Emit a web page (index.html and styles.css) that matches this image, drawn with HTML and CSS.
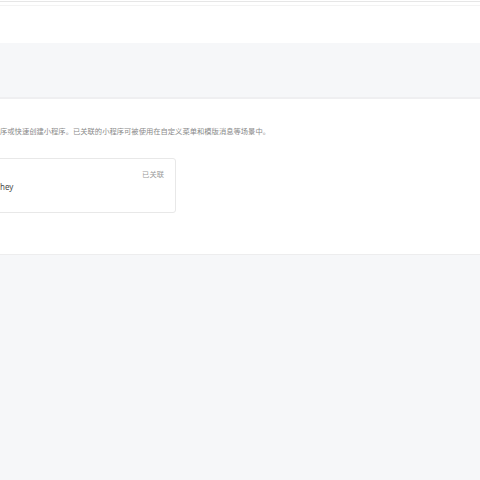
FILE: index.html
```html
<!DOCTYPE html>
<html lang="zh-CN">
<head>
<meta charset="utf-8">
<title>小程序管理</title>
<link rel="stylesheet" href="styles.css">
</head>
<body>
<div class="page">
  <header class="topbar"></header>
  <div class="tabs"></div>
  <section class="panel">
    <div class="panel-inner">
      <p class="desc">序或快速创建小程序。已关联的小程序可被使用在自定义菜单和模版消息等场景中。</p>
      <div class="card">
        <span class="name">hey</span>
        <span class="status">已关联</span>
      </div>
    </div>
  </section>
</div>
</body>
</html>
```

FILE: styles.css
```css
html, body {
  margin: 0;
  padding: 0;
  background: #f6f7f9;
  font-family: "Noto Sans CJK SC", "Liberation Sans", sans-serif;
}
.page {
  width: 480px;
  overflow: hidden;
}
.topbar {
  height: 39px;
  background: #fff;
  border-top: 1px solid #fff;
  box-shadow: inset 0 1px 0 #e6e6e6, inset 0 4px 0 #fff, inset 0 5px 0 #f3f3f3;
  padding-top: 3px;
}
.tabs {
  height: 54px;
  background: #f6f7f9;
  border-bottom: 2px solid #efeff1;
}
.panel {
  background: #fff;
  border-bottom: 1px solid #ededee;
  height: 155px;
}
.panel-inner {
  padding-top: 27px;
}
.desc {
  margin: 0;
  font-size: 7.3px;
  line-height: 10px;
  color: #8a8a8a;
  white-space: nowrap;
}
.card {
  margin-top: 22px;
  margin-left: -10px;
  width: 184px;
  height: 53px;
  border: 1px solid #e8e8e8;
  border-radius: 3px;
  display: flex;
  justify-content: space-between;
  align-items: flex-start;
}
.name {
  margin: 23px 0 0 9px;
  font-size: 8px;
  line-height: 10px;
  color: #4a4a4a;
  font-family: "Noto Sans", "Liberation Sans", sans-serif;
}
.status {
  margin: 10px 11px 0 0;
  font-size: 7.3px;
  line-height: 10px;
  color: #9a9a9a;
}
```
